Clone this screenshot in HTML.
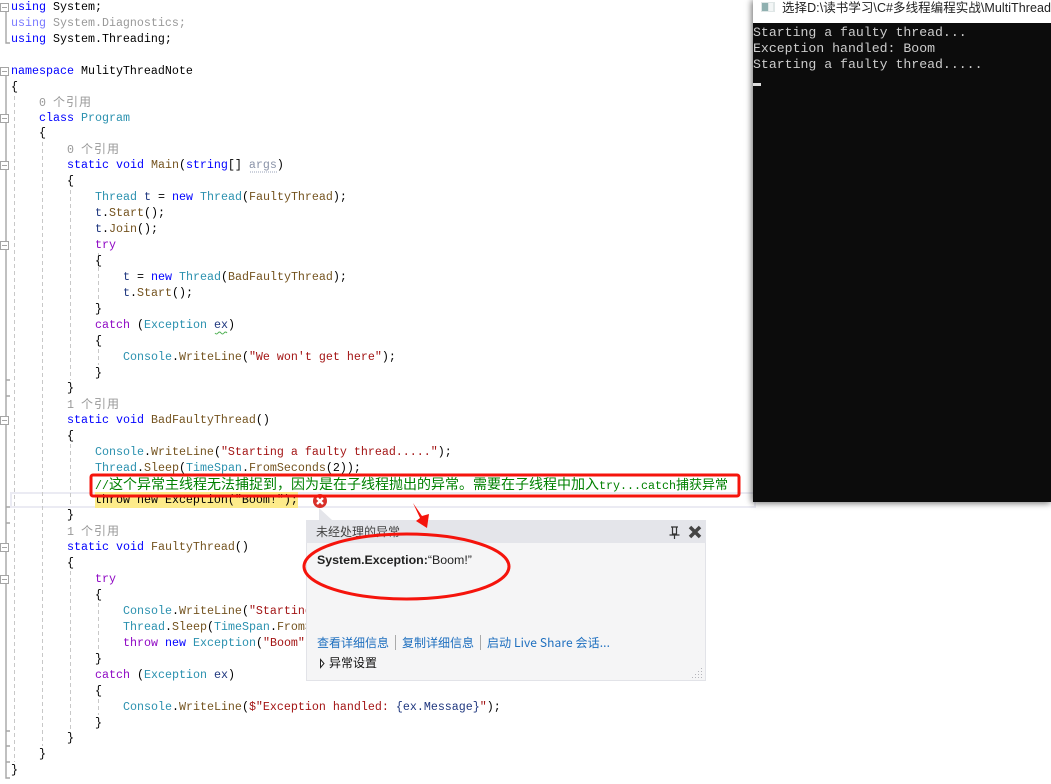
<!DOCTYPE html>
<html><head><meta charset="utf-8"><style>
html,body{margin:0;padding:0;background:#fff}
#r{position:relative;width:1051px;height:784px;overflow:hidden;background:#fff}
.l{position:absolute;height:16px;line-height:16px;white-space:pre;font-family:"Liberation Mono","Noto Sans CJK SC",monospace;font-size:11.67px;color:#000}
.k{color:#0000ff}.t{color:#2b91af}.m{color:#74531f}.s{color:#a31515}.c{color:#8f08c4}.v{color:#1f377f}
.g{color:#999}.f{color:#7a7aff}.h{color:#008000}
.z{font-family:"Noto Sans CJK SC",sans-serif;font-size:12px;letter-spacing:1px}
.j{font-family:"Noto Sans CJK SC",sans-serif;font-size:14px;line-height:16px}
.q{font-family:"Noto Sans CJK SC",sans-serif;font-size:13px;line-height:16px}
svg{position:absolute;left:0;top:0}
.u{position:absolute;font-family:"Noto Sans CJK SC",sans-serif;font-size:12px;line-height:16px;white-space:pre}
.a{color:#1e6fbf}
.o{position:absolute;left:753px;height:16px;line-height:16px;font-family:"Liberation Mono",monospace;font-size:13.2px;color:#ccc;white-space:pre}
</style></head><body><div id="r">

<div style="position:absolute;left:10px;top:492px;width:742px;height:12px;border:2px solid #ebebf3"></div>
<div style="position:absolute;left:95px;top:492px;width:203px;height:16px;background:#fdeb8a"></div>

<svg width="1051" height="784">
<g fill="none" stroke="#a5a5a5" stroke-width="1.4">
<path d="M6 12V43H10M6 76V778H10M6 380H10M6 396H10M6 507H10M6 523H10M6 731H10M6 746H10M6 762H10"/>
</g>
<g fill="none" stroke="#a5a5a5" stroke-width="1">
<rect x="0.500" y="3.500" width="8" height="8" fill="#fff"/><path d="M2 7.500H7"/>
<rect x="0.500" y="67.500" width="8" height="8" fill="#fff"/><path d="M2 71.500H7"/>
<rect x="0.500" y="114.500" width="8" height="8" fill="#fff"/><path d="M2 118.500H7"/>
<rect x="0.500" y="161.500" width="8" height="8" fill="#fff"/><path d="M2 165.500H7"/>
<rect x="0.500" y="241.500" width="8" height="8" fill="#fff"/><path d="M2 245.500H7"/>
<rect x="0.500" y="416.500" width="8" height="8" fill="#fff"/><path d="M2 420.500H7"/>
<rect x="0.500" y="543.500" width="8" height="8" fill="#fff"/><path d="M2 547.500H7"/>
<rect x="0.500" y="575.500" width="8" height="8" fill="#fff"/><path d="M2 579.500H7"/>
</g>
<g stroke="#c8c8c8" stroke-width="1" stroke-dasharray="4 3">
<path d="M14.500 96V762M42.500 142V746M70.500 190V380M70.500 444V507M70.500 571V730M98.500 253V301M98.500 349V365M98.500 603V650M98.500 699V715"/>
</g>
<path d="M215 333q1.500 2 3 0t3 0t3 0t3 0" fill="none" stroke="#4caf50" stroke-width="1"/>
<g fill="none" stroke="#9aa3b8" stroke-dasharray="1 1"><path d="M250 172H278"/></g>
</svg>

<div class="l" style="left:11px;top:-1px"><span class="k">using</span> System;</div>
<div class="l" style="left:11px;top:15px"><span class="f">using</span> <span class="g">System.Diagnostics;</span></div>
<div class="l" style="left:11px;top:31px"><span class="k">using</span> System.Threading;</div>
<div class="l" style="left:11px;top:63px"><span class="k">namespace</span> MulityThreadNote</div>
<div class="l" style="left:11px;top:79px">{</div>
<div class="l g" style="left:39px;top:94px">0 <span class="z">个引用</span></div>
<div class="l" style="left:39px;top:110px"><span class="k">class</span> <span class="t">Program</span></div>
<div class="l" style="left:39px;top:125px">{</div>
<div class="l g" style="left:67px;top:141px">0 <span class="z">个引用</span></div>
<div class="l" style="left:67px;top:157px"><span class="k">static void</span> <span class="m">Main</span>(<span class="k">string</span>[] <span style="color:#8a93a8">args</span>)</div>
<div class="l" style="left:67px;top:173px">{</div>
<div class="l" style="left:95px;top:189px"><span class="t">Thread</span> <span class="v">t</span> = <span class="k">new</span> <span class="t">Thread</span>(<span class="m">FaultyThread</span>);</div>
<div class="l" style="left:95px;top:205px"><span class="v">t</span>.<span class="m">Start</span>();</div>
<div class="l" style="left:95px;top:221px"><span class="v">t</span>.<span class="m">Join</span>();</div>
<div class="l" style="left:95px;top:237px"><span class="c">try</span></div>
<div class="l" style="left:95px;top:253px">{</div>
<div class="l" style="left:123px;top:269px"><span class="v">t</span> = <span class="k">new</span> <span class="t">Thread</span>(<span class="m">BadFaultyThread</span>);</div>
<div class="l" style="left:123px;top:285px"><span class="v">t</span>.<span class="m">Start</span>();</div>
<div class="l" style="left:95px;top:301px">}</div>
<div class="l" style="left:95px;top:317px"><span class="c">catch</span> (<span class="t">Exception</span> <span class="v">ex</span>)</div>
<div class="l" style="left:95px;top:333px">{</div>
<div class="l" style="left:123px;top:349px"><span class="t">Console</span>.<span class="m">WriteLine</span>(<span class="s">"We won't get here"</span>);</div>
<div class="l" style="left:95px;top:365px">}</div>
<div class="l" style="left:67px;top:380px">}</div>
<div class="l g" style="left:67px;top:396px">1 <span class="z">个引用</span></div>
<div class="l" style="left:67px;top:412px"><span class="k">static void</span> <span class="m">BadFaultyThread</span>()</div>
<div class="l" style="left:67px;top:428px">{</div>
<div class="l" style="left:95px;top:444px"><span class="t">Console</span>.<span class="m">WriteLine</span>(<span class="s">"Starting a faulty thread....."</span>);</div>
<div class="l" style="left:95px;top:460px"><span class="t">Thread</span>.<span class="m">Sleep</span>(<span class="t">TimeSpan</span>.<span class="m">FromSeconds</span>(2));</div>
<div class="l h" style="left:95px;top:476px">//<span class="j">这个异常主线程无法捕捉到，因为是在子线程抛出的异常。需要在子线程中加入</span>try...catch<span class="q">捕获异常</span></div>
<div class="l" style="left:95px;top:492px">throw new Exception("Boom!");</div>
<div class="l" style="left:67px;top:507px">}</div>
<div class="l g" style="left:67px;top:523px">1 <span class="z">个引用</span></div>
<div class="l" style="left:67px;top:539px"><span class="k">static void</span> <span class="m">FaultyThread</span>()</div>
<div class="l" style="left:67px;top:555px">{</div>
<div class="l" style="left:95px;top:571px"><span class="c">try</span></div>
<div class="l" style="left:95px;top:587px">{</div>
<div class="l" style="left:123px;top:603px"><span class="t">Console</span>.<span class="m">WriteLine</span>(<span class="s">"Starting a faulty thread..."</span>);</div>
<div class="l" style="left:123px;top:619px"><span class="t">Thread</span>.<span class="m">Sleep</span>(<span class="t">TimeSpan</span>.<span class="m">FromSeconds</span>(1));</div>
<div class="l" style="left:123px;top:635px"><span class="c">throw</span> <span class="k">new</span> <span class="t">Exception</span>(<span class="s">"Boom"</span>);</div>
<div class="l" style="left:95px;top:651px">}</div>
<div class="l" style="left:95px;top:667px"><span class="c">catch</span> (<span class="t">Exception</span> <span class="v">ex</span>)</div>
<div class="l" style="left:95px;top:683px">{</div>
<div class="l" style="left:123px;top:699px"><span class="t">Console</span>.<span class="m">WriteLine</span>(<span class="s">$"Exception handled: </span><span class="v">{ex.Message}</span><span class="s">"</span>);</div>
<div class="l" style="left:95px;top:715px">}</div>
<div class="l" style="left:67px;top:730px">}</div>
<div class="l" style="left:39px;top:746px">}</div>
<div class="l" style="left:11px;top:762px">}</div>

<!-- console -->
<div style="position:absolute;left:753px;top:0;width:298px;height:502px;background:#0c0c0c;box-shadow:-2px 0 6px rgba(0,0,0,.35),0 2px 6px rgba(0,0,0,.3)"></div>
<div style="position:absolute;left:753px;top:0;width:298px;height:23px;background:#fff;overflow:hidden">
<svg width="20" height="20" style="left:8px;top:0"><rect x="0" y="2" width="14" height="10" fill="#dfe6e6"/><rect x="1" y="3" width="6" height="8" fill="#8fb0b0"/><rect x="8" y="3" width="4" height="8" fill="#f3f6f6"/></svg>
<div style="position:absolute;left:29px;top:0;line-height:16px;white-space:pre;font-family:'Liberation Sans','Noto Sans CJK SC',sans-serif;font-size:12.5px;letter-spacing:.05px;color:#222">选择D:\读书学习\C#多线程编程实战\MultiThread</div>
</div>
<div class="o" style="top:25px">Starting a faulty thread...</div>
<div class="o" style="top:41px">Exception handled: Boom</div>
<div class="o" style="top:57px">Starting a faulty thread.....</div>
<div style="position:absolute;left:753px;top:83px;width:8px;height:3px;background:#ddd"></div>

<!-- popup -->
<div style="position:absolute;left:306px;top:520px;width:398px;height:160px;background:#f5f5f6;border:1px solid #e2e3e8;border-top:0"></div>
<div style="position:absolute;left:306px;top:520px;width:400px;height:23px;background:#e4e5ea"></div>
<div class="u" style="left:316px;top:524px;color:#444">未经处理的异常</div>
<div style="position:absolute;left:317px;top:552px;line-height:16px;white-space:pre;font-family:'Liberation Sans',sans-serif;font-size:12.4px;color:#222"><b>System.Exception:</b>“Boom!”</div>
<div class="u a" style="left:317px;top:635px">查看详细信息</div>
<div style="position:absolute;left:395px;top:635px;width:1px;height:15px;background:#aaa"></div>
<div class="u a" style="left:402px;top:635px">复制详细信息</div>
<div style="position:absolute;left:480px;top:635px;width:1px;height:15px;background:#aaa"></div>
<div class="u a" style="left:487px;top:635px;letter-spacing:.1px">启动 Live Share 会话...</div>
<div class="u" style="left:329px;top:655px;color:#111">异常设置</div>

<svg width="1051" height="784">
<path d="M319 508L332 520H319Z" fill="#e4e5ea"/>
<circle cx="320" cy="501" r="7" fill="#d9302a"/>
<path d="M317 498L323 504M323 498L317 504" stroke="#fff" stroke-width="2.400"/>
<path d="M320.500 659.500V667.500L324 663.500Z" fill="#fff" stroke="#222"/>
<path d="M671 527H678M672.500 527V534H676.500V527M669.500 535H679.500M674.500 535V539" fill="none" stroke="#333" stroke-width="1.200"/>
<path d="M690 527L700 537M700 527L690 537" stroke="#444" stroke-width="3.500"/>
<g fill="#b5b5bb"><rect x="701" y="668" width="1" height="1"/><rect x="701" y="671" width="1" height="1"/><rect x="698" y="671" width="1" height="1"/><rect x="701" y="674" width="1" height="1"/><rect x="698" y="674" width="1" height="1"/><rect x="695" y="674" width="1" height="1"/><rect x="701" y="677" width="1" height="1"/><rect x="698" y="677" width="1" height="1"/><rect x="695" y="677" width="1" height="1"/><rect x="692" y="677" width="1" height="1"/></g>
<rect x="91" y="475" width="648" height="21" rx="2" fill="none" stroke="#f5140c" stroke-width="3"/>
<ellipse cx="406.500" cy="566.500" rx="102.500" ry="32.500" fill="none" stroke="#f5140c" stroke-width="3"/>
<path d="M413 503L422 516L429 514L427 528L416 521L420 518Z" fill="#f5140c"/>
</svg>
</div></body></html>
